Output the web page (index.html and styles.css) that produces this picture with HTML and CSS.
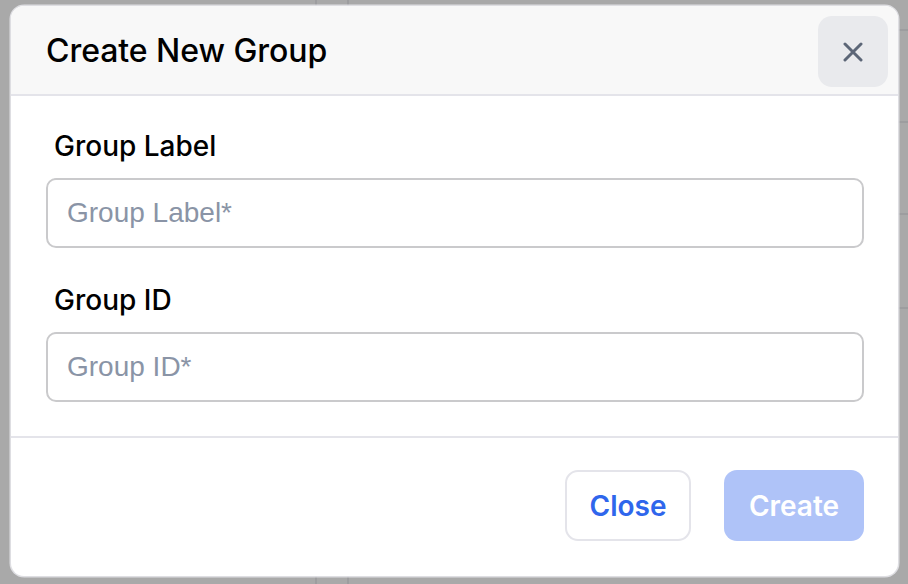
FILE: index.html
```html
<!DOCTYPE html>
<html lang="en">
<head>
<meta charset="utf-8">
<title>Create New Group</title>
<link rel="stylesheet" href="styles.css">
</head>
<body>
<div class="overlay">
  <section class="modal" role="dialog" aria-labelledby="modal-title">
    <header class="modal-header">
      <h2 id="modal-title" class="modal-title">Create New Group</h2>
      <button class="icon-close" type="button" aria-label="Close">
        <svg width="20" height="20" viewBox="0 0 20 20" fill="none" stroke="currentColor" stroke-width="3" stroke-linecap="round">
          <path d="M2 2 L18 18 M18 2 L2 18"/>
        </svg>
      </button>
    </header>
    <div class="modal-body">
      <div class="field">
        <label class="field-label" for="group-label">Group Label</label>
        <input class="field-input" id="group-label" type="text" placeholder="Group Label*">
      </div>
      <div class="field">
        <label class="field-label" for="group-id">Group ID</label>
        <input class="field-input" id="group-id" type="text" placeholder="Group ID*">
      </div>
    </div>
    <footer class="modal-footer">
      <button class="btn btn-outline" type="button">Close</button>
      <button class="btn btn-primary" type="button" disabled>Create</button>
    </footer>
  </section>
</div>
</body>
</html>
```
FILE: styles.css
```css
* {
  box-sizing: border-box;
}

html, body {
  margin: 0;
  height: 100%;
}

body {
  background-color: #a9a9a9;
  background-image:
    linear-gradient(#9d9d9f, #9d9d9f),
    linear-gradient(#9d9d9f, #9d9d9f),
    linear-gradient(#9d9d9f, #9d9d9f),
    linear-gradient(#9d9d9f, #9d9d9f),
    linear-gradient(#9d9d9f, #9d9d9f),
    linear-gradient(#9d9d9f, #9d9d9f);
  background-repeat: no-repeat;
  background-size: 2px 100%, 2px 100%, 12px 2px, 12px 2px, 12px 2px, 12px 2px;
  background-position: 315px 0, 347px 0, 898px 29px, 898px 121px, 898px 213px, 898px 307px;
  font-family: Inter, "Noto Sans", "Liberation Sans", sans-serif;
  color: #000;
}

.overlay {
  padding: 6px 10px 8px 11px;
}

.modal {
  width: 887px;
  height: 570px;
  background: #fff;
  border-radius: 13px;
  box-shadow: 0 0 0 1.5px rgba(232, 232, 236, 0.85);
  overflow: hidden;
  display: flex;
  flex-direction: column;
}

.modal-header {
  height: 90px;
  flex: none;
  background: #f8f8f8;
  border-bottom: 2px solid #e4e4ea;
  display: flex;
  align-items: flex-start;
  justify-content: space-between;
  padding: 10px 10px 0 35px;
}

.modal-title {
  margin: 0;
  padding-top: 15px;
  font-size: 32px;
  line-height: 40px;
  font-weight: 500;
  letter-spacing: -0.05px;
  color: #000;
}

.icon-close {
  width: 70px;
  height: 71px;
  border: none;
  border-radius: 14px;
  background: #e9eaed;
  color: #5c6677;
  display: flex;
  align-items: center;
  justify-content: center;
  padding: 0;
  cursor: pointer;
}

.modal-body {
  padding: 33px 34px 0 35px;
  flex: none;
}

.field + .field {
  margin-top: 35px;
}

.field-label {
  display: block;
  padding-left: 8px;
  font-size: 28px;
  line-height: 34px;
  font-weight: 500;
  color: #000;
  margin-bottom: 15px;
}

.field-input {
  display: block;
  width: 100%;
  height: 70px;
  border: 2px solid #cacacc;
  border-radius: 10px;
  padding: 0 19px;
  font-family: "Liberation Sans", Arial, sans-serif;
  font-size: 28px;
  color: #000;
  background: #fff;
  outline: none;
}

.field-input::placeholder {
  color: #8a94a6;
  opacity: 1;
}

.modal-footer {
  margin-top: 34px;
  border-top: 2px solid #e4e4ea;
  flex: 1;
  display: flex;
  justify-content: flex-end;
  align-items: flex-start;
  gap: 33px;
  padding: 32px 34px 0 0;
}

.btn {
  height: 71px;
  border-radius: 13px;
  font-family: Inter, "Noto Sans", "Liberation Sans", sans-serif;
  font-size: 28px;
  font-weight: 600;
  padding: 0;
  cursor: pointer;
}

.btn-outline {
  width: 126px;
  background: #fff;
  border: 2px solid #e4e4ea;
  color: #2f66ec;
}

.btn-primary {
  width: 140px;
  background: #afc3f8;
  border: none;
  color: #fff;
  cursor: not-allowed;
}
```
